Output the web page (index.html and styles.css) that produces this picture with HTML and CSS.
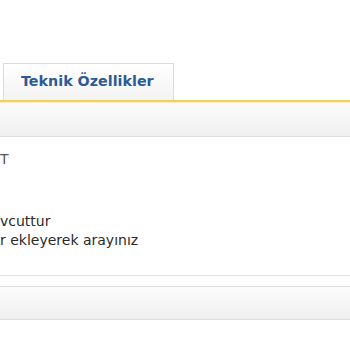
FILE: index.html
```html
<!DOCTYPE html>
<html lang="tr">
<head>
<meta charset="utf-8">
<link rel="stylesheet" href="styles.css">
</head>
<body>
<div class="page">
  <div class="tabs">
    <div class="tab">Teknik Özellikler</div>
  </div>
  <div class="tabline"></div>
  <div class="bar"></div>
  <div class="content">
    <div class="label"><span class="cut"><span>Stok Durumu:</span></span>T</div>
    <div class="msg">
      <p class="l1"><span class="cut"><span>Bu ürün stokta me</span></span>vcuttur</p>
      <p class="l2"><span class="cut"><span>Farklı ürünler için filtre</span></span>r ekleyerek arayınız</p>
    </div>
  </div>
  <div class="sep"></div>
  <div class="bar bar2"></div>
</div>
</body>
</html>
```
FILE: styles.css
```css
html, body {
  margin: 0;
  padding: 0;
  background: #fff;
  overflow: hidden;
}
.page {
  width: 350px;
  height: 350px;
  overflow: hidden;
  font-family: "DejaVu Sans", "Open Sans", sans-serif;
}
.tabs {
  padding-top: 63px;
  padding-left: 3px;
  display: flex;
}
.tab {
  box-sizing: border-box;
  width: 171px;
  height: 37px;
  border: 1px solid #dcdcdc;
  border-bottom: none;
  background: linear-gradient(#ffffff, #f3f3f3);
  color: #2d5a98;
  font-weight: 700;
  font-size: 14.3px;
  line-height: 35px;
  padding-left: 17px;
  white-space: nowrap;
}
.tabline {
  height: 2px;
  background: #f1cf60;
  box-shadow: 0 1px 1px #f9ecbd;
}
.bar {
  margin-top: 1px;
  height: 33px;
  background: linear-gradient(#fbfbfb, #efefef);
  border-bottom: 1px solid #dddddd;
}
.content {
  height: 138px;
}
.cut {
  display: inline-flex;
  width: 0;
  justify-content: flex-end;
  white-space: nowrap;
}
.cut > span {
  flex: none;
  white-space: pre;
}
.label {
  padding-top: 12px;
  font-size: 14px;
  color: #555;
  white-space: nowrap;
  line-height: 20px;
}
.msg {
  margin-top: 43px;
  font-size: 14px;
  color: #2a2a2a;
  line-height: 19px;
  white-space: nowrap;
}
.msg p { margin: 0; }
.l2 { margin-left: -2px; }
.sep {
  height: 1px;
  background: #e0e0e0;
}
.bar2 {
  margin-top: 10px;
  height: 32px;
  border-top: 1px solid #dddddd;
  border-bottom: 1px solid #dddddd;
}
```
